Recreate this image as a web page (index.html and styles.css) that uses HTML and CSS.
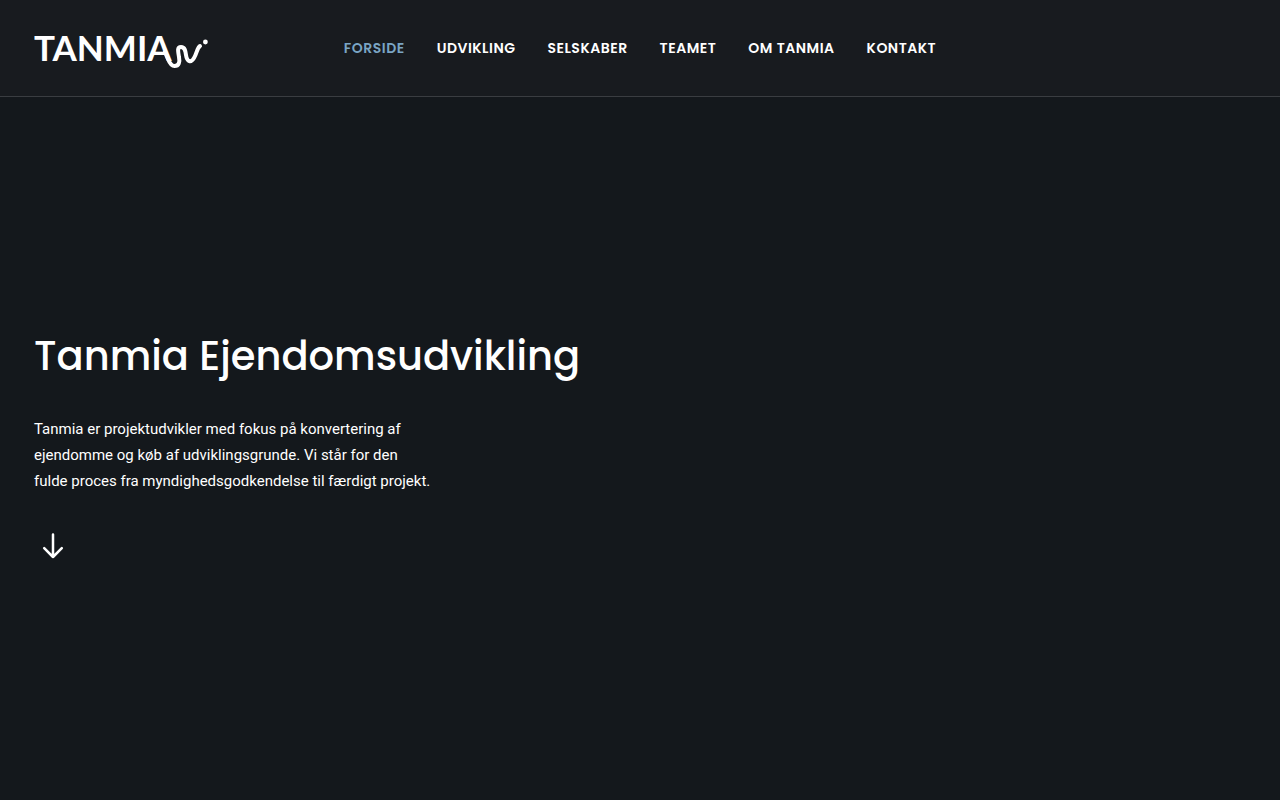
FILE: index.html
```html
<!DOCTYPE html>
<html lang="da">
<head>
    <meta charset="UTF-8">
    <meta name="viewport" content="width=device-width, initial-scale=1.0">
    <title>Tanmia Ejendomsudvikling</title>
    <link rel="stylesheet" href="styles.css">
</head>
<body>
<header class="site-header">
    <a class="logo" href="#" aria-label="Tanmia">
        <svg width="176" height="48" viewBox="0 0 176 48">
            <text class="logo-text" x="0" y="37">TANMIA</text>
            <path class="logo-wave" d="M131 28L134 35C136 40 138 42 140.500 42C145 42 146 38 145 33C144 27 143 23 147 23C151 23 151.500 27 152 31C153 38 157 39 160 34C163 29 163 24 166 22"/>
            <circle class="logo-dot" cx="171.400" cy="18" r="2.400"/>
        </svg>
    </a>
    <nav class="main-nav">
        <a class="active" href="#">Forside</a>
        <a href="#udvikling">Udvikling</a>
        <a href="#selskaber">Selskaber</a>
        <a href="#teamet">Teamet</a>
        <a href="#om">Om Tanmia</a>
        <a href="#kontakt">Kontakt</a>
    </nav>
</header>

<main class="hero">
    <h1>Tanmia Ejendomsudvikling</h1>
    <p>Tanmia er projektudvikler med fokus på konvertering af ejendomme og køb af udviklingsgrunde. Vi står for den fulde proces fra myndighedsgodkendelse til færdigt projekt.</p>
    <a class="scroll-down" href="#udvikling" aria-label="Rul ned">
        <svg width="22" height="26" viewBox="0 0 22 26">
            <path d="M11 1.500V24M2.200 15.200L11 24L19.800 15.200"/>
        </svg>
    </a>
</main>
</body>
</html>
```
FILE: styles.css
```css
* { box-sizing: border-box; }
body {
    margin: 0;
    min-height: 100vh;
    display: flex;
    flex-direction: column;
    background-color: #14181c;
    color: #fff;
    font-family: Roboto, sans-serif;
}
a { color: inherit; text-decoration: none; }
svg { display: block; }

/* Header */
.site-header {
    display: grid;
    grid-template-columns: 1fr auto 1fr;
    align-items: center;
    min-height: 97px;
    padding: 0 34px;
    background-color: #181b1f;
    border-bottom: 1px solid #3a3d41;
}
.logo { justify-self: start; }
.logo-text { font-family: Lato, sans-serif; font-weight: 700; font-size: 35px; fill: #fff; }
.logo-wave { fill: none; stroke: #fff; stroke-width: 4px; stroke-linecap: round; }
.logo-dot { fill: #fff; }

.main-nav { display: flex; gap: 32px; }
.main-nav a {
    font-family: Poppins, Inter, sans-serif;
    font-size: 14px;
    font-weight: 600;
    line-height: 20px;
    letter-spacing: 0.5px;
    text-transform: uppercase;
}
.main-nav a.active { color: #7aa5c4; }

/* Hero */
.hero {
    flex: 1;
    display: flex;
    flex-direction: column;
    justify-content: center;
    align-items: flex-start;
    padding: 0 34px 4px;
}
.hero h1 {
    margin: 0 0 32px;
    font-family: Poppins, Inter, sans-serif;
    font-size: 40px;
    font-weight: 500;
    line-height: 56px;
}
.hero p {
    max-width: 400px;
    margin: 0 0 32px;
    font-size: 15px;
    line-height: 26px;
}
.scroll-down { padding: 7px 8px; }
.scroll-down path {
    fill: none;
    stroke: #fff;
    stroke-width: 2.5px;
    stroke-linecap: round;
    stroke-linejoin: round;
}
```
